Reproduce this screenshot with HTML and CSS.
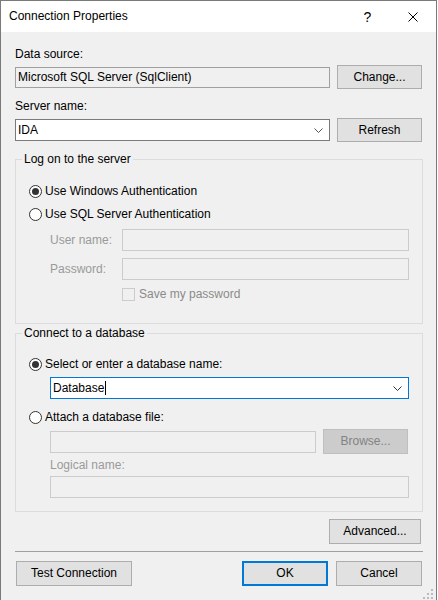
FILE: index.html
```html
<!DOCTYPE html>
<html>
<head>
<meta charset="utf-8">
<link rel="stylesheet" href="styles.css">
</head>
<body>
<div class="window">
  <div class="titlebar">
    <span class="title">Connection Properties</span>
    <span class="capbtn help">?</span>
    <span class="capbtn close">
      <svg width="10" height="10" viewBox="0 0 10 10"><path d="M0.5 0.5 L9.5 9.5 M9.5 0.5 L0.5 9.5" stroke="#000" stroke-width="1" fill="none"/></svg>
    </span>
  </div>
  <div class="content">
    <div class="label first">Data source:</div>
    <div class="row">
      <div class="textbox readonly">Microsoft SQL Server (SqlClient)</div>
      <div class="btn">Change...</div>
    </div>
    <div class="label second">Server name:</div>
    <div class="row row2">
      <div class="textbox combo"><span>IDA</span>
        <svg class="chev" width="9" height="5" viewBox="0 0 9 5"><path d="M0.5 0.5 L4.5 4.5 L8.5 0.5" stroke="#555" fill="none"/></svg>
      </div>
      <div class="btn">Refresh</div>
    </div>

    <div class="group g1">
      <span class="legend">Log on to the server</span>
      <div class="radio-row"><span class="radio checked"></span><span>Use Windows Authentication</span></div>
      <div class="radio-row r2"><span class="radio"></span><span>Use SQL Server Authentication</span></div>
      <div class="field-row">
        <span class="flabel">User name:</span>
        <div class="textbox disabled grow"></div>
      </div>
      <div class="field-row">
        <span class="flabel">Password:</span>
        <div class="textbox disabled grow"></div>
      </div>
      <div class="check-row"><span class="checkbox"></span><span class="dis-text">Save my password</span></div>
    </div>

    <div class="group g2">
      <span class="legend">Connect to a database</span>
      <div class="radio-row"><span class="radio checked"></span><span>Select or enter a database name:</span></div>
      <div class="textbox combo focus sub"><span>Database<span class="caret"></span></span>
        <svg class="chev" width="9" height="5" viewBox="0 0 9 5"><path d="M0.5 0.5 L4.5 4.5 L8.5 0.5" stroke="#333" fill="none"/></svg>
      </div>
      <div class="radio-row r4"><span class="radio"></span><span>Attach a database file:</span></div>
      <div class="file-row">
        <div class="textbox disabled filebox"></div>
        <div class="btn disabled-btn">Browse...</div>
      </div>
      <div class="sub-label dis-label">Logical name:</div>
      <div class="textbox disabled sub logical"></div>
    </div>

    <div class="adv-row"><div class="btn adv">Advanced...</div></div>
    <div class="separator"></div>
    <div class="bottom-row">
      <div class="btn test">Test Connection</div>
      <div class="spacer"></div>
      <div class="btn ok">OK</div>
      <div class="btn cancel">Cancel</div>
    </div>
  </div>
  <svg class="grip" width="10" height="10" viewBox="0 0 10 10">
    <rect x="8" y="0" width="2" height="2" fill="#bcbcbc"/>
    <rect x="4" y="4" width="2" height="2" fill="#bcbcbc"/>
    <rect x="8" y="4" width="2" height="2" fill="#bcbcbc"/>
    <rect x="0" y="8" width="2" height="2" fill="#bcbcbc"/>
    <rect x="4" y="8" width="2" height="2" fill="#bcbcbc"/>
    <rect x="8" y="8" width="2" height="2" fill="#bcbcbc"/>
  </svg>
</div>
</body>
</html>
```
FILE: styles.css
```css
* { box-sizing: border-box; }
html, body { margin: 0; padding: 0; }
body {
  background: #ffffff;
  font-family: "Liberation Sans", Arial, sans-serif;
  font-size: 12px;
  color: #000;
  width: 438px;
  height: 600px;
  overflow: hidden;
}
.window {
  position: relative;
  width: 437px;
  height: 601px;
  border: 1px solid #7a7a7a;
  background: #f0f0f0;
}
.titlebar {
  height: 31px;
  background: #fff;
  display: flex;
  align-items: center;
  padding-left: 8px;
}
.title { flex: 1; line-height: 15px; }
.capbtn {
  width: 46px;
  height: 31px;
  display: flex;
  align-items: center;
  justify-content: center;
}
.help { font-size: 14px; padding-left: 1px; }
.content {
  padding: 0 13px 0 14px;
}
.label { line-height: 15px; }
.label.first { margin-top: 15px; }
.label.second { margin-top: 10px; }
.row {
  display: flex;
  align-items: center;
  gap: 7px;
  height: 24px;
  margin-top: 3px;
  padding-right: 1px;
}
.row.row2 { margin-top: 4px; }
.textbox {
  height: 22px;
  border: 1px solid #7a7a7a;
  background: #fff;
  display: flex;
  align-items: center;
  padding-left: 2px;
  line-height: 15px;
}
.row .textbox { width: 315px; }
.textbox.readonly {
  background: #f0f0f0;
  border-color: #a0a0a0;
  height: 21px;
}
.textbox.disabled {
  background: #f0f0f0;
  border-color: #cccccc;
}
.combo { justify-content: space-between; padding-right: 6px; }
.combo.focus { border-color: #0078d7; }
.caret {
  display: inline-block;
  width: 1px;
  height: 14px;
  background: #000;
  vertical-align: -3px;
  margin-left: 1px;
}
.btn {
  width: 85px;
  height: 24px;
  background: #e1e1e1;
  border: 1px solid #adadad;
  display: flex;
  align-items: center;
  justify-content: center;
  line-height: 15px;
}
.group {
  position: relative;
  border: 1px solid #dcdcdc;
  padding: 23px 13px 22px 13px;
}
.g1 { margin-top: 17px; }
.g2 { margin-top: 9px; padding-top: 22px; padding-bottom: 13px; }
.legend {
  position: absolute;
  top: -8px;
  left: 6px;
  padding: 0 2px;
  background: #f0f0f0;
  line-height: 15px;
}
.radio-row {
  display: flex;
  align-items: center;
  gap: 3px;
  height: 16px;
  line-height: 15px;
}
.radio-row.r2 { margin-top: 7px; }
.radio-row.r4 { margin-top: 10px; }
.radio {
  position: relative;
  width: 13px;
  height: 13px;
  border: 1px solid #333;
  border-radius: 50%;
  background: #fff;
  flex: none;
}
.radio.checked::after {
  content: "";
  position: absolute;
  left: 2px;
  top: 2px;
  width: 7px;
  height: 7px;
  border-radius: 50%;
  background: #333;
}
.field-row {
  display: flex;
  align-items: center;
  margin-left: 21px;
  margin-top: 7px;
  height: 22px;
}
.flabel { width: 72px; color: #9a9a9a; line-height: 15px; }
.grow { flex: 1; }
.check-row {
  display: flex;
  align-items: center;
  gap: 4px;
  margin-left: 93px;
  margin-top: 8px;
  height: 13px;
  line-height: 15px;
}
.checkbox {
  width: 13px;
  height: 13px;
  border: 1px solid #cccccc;
  background: #f0f0f0;
}
.dis-text { color: #8a8a8a; }
.sub { margin-left: 21px; }
.combo.sub { margin-top: 5px; }
.file-row {
  display: flex;
  align-items: center;
  margin-left: 21px;
  margin-top: 4px;
  height: 25px;
  gap: 7px;
}
.filebox { width: 266px; }
.disabled-btn {
  height: 25px;
  background: #cccccc;
  border-color: #bfbfbf;
  color: #838383;
}
.sub-label { margin-left: 21px; margin-top: 4px; line-height: 15px; }
.dis-label { color: #9a9a9a; }
.logical { margin-top: 3px; }
.adv-row {
  display: flex;
  justify-content: flex-end;
  margin-top: 7px;
  padding-right: 2px;
}
.btn.adv { width: 92px; height: 25px; }
.separator {
  margin-top: 7px;
  height: 1px;
  background: #a0a0a0;
}
.bottom-row {
  display: flex;
  align-items: center;
  margin-top: 9px;
  padding: 0 1px;
  gap: 8px;
}
.btn.test { width: 116px; height: 25px; }
.spacer { flex: 1; }
.btn.ok { width: 86px; height: 25px; border: 2px solid #0078d7; }
.btn.cancel { width: 86px; height: 25px; }
.grip {
  position: absolute;
  right: 3px;
  top: 588px;
}
```
